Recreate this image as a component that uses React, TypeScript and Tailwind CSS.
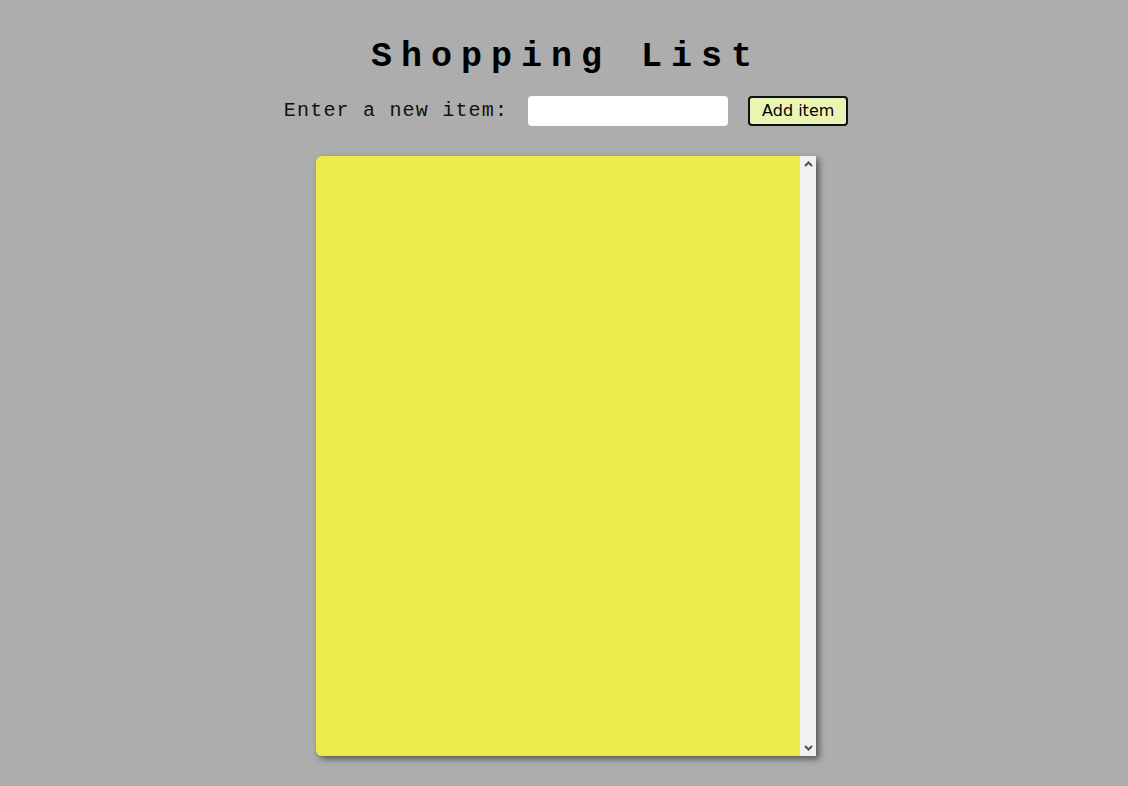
import { useState } from 'react'

export default function App() {
  const [item, setItem] = useState('')
  const [items, setItems] = useState<string[]>([])

  const addItem = () => {
    if (!item.trim()) return
    setItems([...items, item.trim()])
    setItem('')
  }

  return (
    <div className="min-h-[786px] bg-[#adadad] pl-1 pt-[32px] flex flex-col items-center">
      <h1 className="font-['Liberation_Mono',monospace] text-[35px] leading-[50px] font-bold tracking-[9px] text-black">
        Shopping List
      </h1>

      <div className="mt-[14px] flex items-center h-[30px]">
        <label className="font-['Liberation_Mono',monospace] text-[20px] leading-[30px] tracking-[1.2px] text-[#111]">
          Enter a new item:
        </label>
        <input
          value={item}
          onChange={(e) => setItem(e.target.value)}
          className="ml-[20px] w-[200px] h-[30px] rounded-[4px] bg-white outline-none px-2"
        />
        <button
          onClick={addItem}
          className="ml-[20px] w-[100px] h-[30px] rounded-[4px] border-2 border-[#111] bg-[#eaf5b5] text-black font-['DejaVu_Sans',sans-serif] text-[16px] leading-none"
        >
          Add item
        </button>
      </div>

      {/* LIST */}
      <div className="mt-[30px] flex w-[500px] h-[600px] rounded-l-[6px] shadow-[3px_3px_6px_rgba(0,0,0,0.5)]">
        <ul className="flex-1 bg-[#eceb4c] rounded-l-[6px] p-4 font-['Liberation_Mono',monospace] text-[20px]">
          {items.map((it, i) => (
            <li key={i}>{it}</li>
          ))}
        </ul>
        <div className="w-[16px] bg-[#f1f1f1] flex flex-col items-center justify-between py-[5px]">
          <svg width="9" height="6" viewBox="0 0 9 6">
            <polyline points="1,5 4.5,1.5 8,5" fill="none" stroke="#505050" strokeWidth="2" />
          </svg>
          <svg width="9" height="6" viewBox="0 0 9 6">
            <polyline points="1,1 4.5,4.5 8,1" fill="none" stroke="#505050" strokeWidth="2" />
          </svg>
        </div>
      </div>
    </div>
  )
}
